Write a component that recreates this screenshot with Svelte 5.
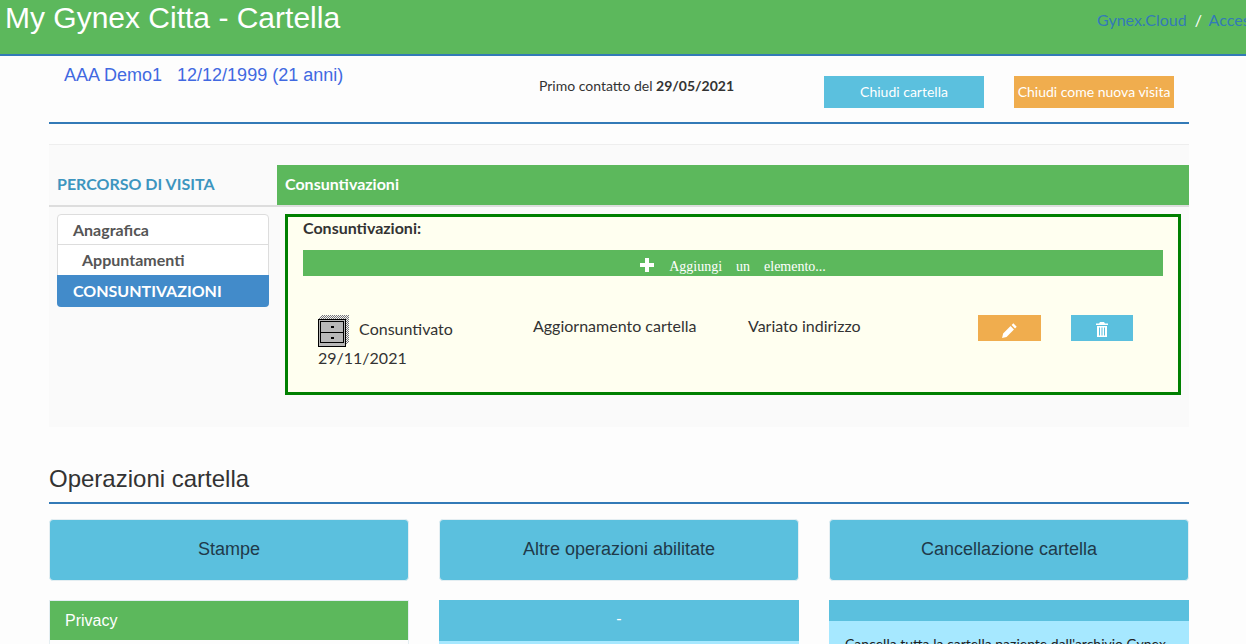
<script>
    const entries = [
        { stato: 'Consuntivato', data: '29/11/2021', tipo: 'Aggiornamento cartella', nota: 'Variato indirizzo' }
    ];
</script>

<div class="page">
    <header class="topbar">
        <h1>My Gynex Citta - Cartella</h1>
        <nav>
            <span class="link">Gynex.Cloud</span>
            <span class="sep">/</span>
            <span class="link">Accesso</span>
        </nav>
    </header>

    <div class="container">
        <section class="patient">
            <div class="who">AAA Demo1 <span>12/12/1999 (21 anni)</span></div>
            <div class="first">Primo contatto del <b>29/05/2021</b></div>
            <button class="btn info wide">Chiudi cartella</button>
            <button class="btn warn wide">Chiudi come nuova visita</button>
        </section>

        <hr />

        <section class="visit">
            <div class="tabs">
                <div class="tab-title">PERCORSO DI VISITA</div>
                <div class="tab-active">Consuntivazioni</div>
            </div>
            <div class="visit-body">
                <ul class="menu">
                    <li>Anagrafica</li>
                    <li class="sub">Appuntamenti</li>
                    <li class="active">CONSUNTIVAZIONI</li>
                </ul>
                <div class="box">
                    <div class="box-title">Consuntivazioni:</div>
                    <div class="add">
                        <svg width="14" height="14" viewBox="0 0 14 14"><path d="M5 0h4v5h5v4H9v5H5V9H0V5h5z" fill="#fff" /></svg>
                        <span>Aggiungi</span><span>un</span><span>elemento...</span>
                    </div>
                    {#each entries as e}
                        <div class="entry">
                            <div class="state">
                                <svg class="cabinet" width="32" height="32" viewBox="0 0 32 32">
                                    <defs>
                                        <pattern id="dither" width="2" height="2" patternUnits="userSpaceOnUse">
                                            <rect width="2" height="2" fill="#f4f4f4" />
                                            <rect width="1" height="1" fill="#777" />
                                            <rect x="1" y="1" width="1" height="1" fill="#777" />
                                        </pattern>
                                    </defs>
                                    <path d="M0 4L4 0H31V27L27 31H0z" fill="url(#dither)" />
                                    <rect x="0.500" y="4.500" width="27" height="27" fill="#b8b8b8" stroke="#000" />
                                    <rect x="2.500" y="6.500" width="23" height="11" fill="#b8b8b8" stroke="#000" />
                                    <rect x="2.500" y="17.500" width="23" height="10" fill="#b8b8b8" stroke="#000" />
                                    <rect x="13" y="11" width="3" height="2" fill="#000" />
                                    <rect x="13" y="22" width="3" height="2" fill="#000" />
                                </svg>
                                <span class="state-name">{e.stato}</span>
                                <div class="state-date">{e.data}</div>
                            </div>
                            <div class="tipo">{e.tipo}</div>
                            <div class="nota">{e.nota}</div>
                            <div class="actions">
                                <button class="btn warn icon edit" aria-label="Modifica">
                                    <svg width="17" height="17" viewBox="0 0 16 16"><path d="M11.6 1.200l3.200 3.200-1.600 1.600L10 2.800zM9 3.800L12.200 7l-7 7-4.200 1 1-4.200z" fill="#fff" /></svg>
                                </button>
                                <button class="btn info icon del" aria-label="Elimina">
                                    <svg width="14" height="15" viewBox="0 0 14 15"><path d="M5 0h4l1 1.500h3V3H1V1.500h3zM2 4h10v11H2zM4 5.500v8h1v-8zM6.500 5.500v8h1v-8zM9 5.500v8h1v-8z" fill="#fff" fill-rule="evenodd" /></svg>
                                </button>
                            </div>
                        </div>
                    {/each}
                </div>
            </div>
        </section>

        <h2>Operazioni cartella</h2>

        <div class="ops">
            <div class="op-head">Stampe</div>
            <div class="op-head">Altre operazioni abilitate</div>
            <div class="op-head">Cancellazione cartella</div>

            <div class="card bordered">
                <div class="card-head green">Privacy</div>
            </div>
            <div class="card">
                <div class="card-head blue">-</div>
                <div class="card-body"></div>
            </div>
            <div class="card">
                <div class="card-head blue thin"></div>
                <div class="card-body">Cancella tutta la cartella paziente dall'archivio Gynex</div>
            </div>
        </div>
    </div>
</div>

<style>
    :global(body) {
        background: #fdfdfd;
    }
    .page {
        height: 644px;
        overflow: hidden;
        font-family: 'Lato', sans-serif;
        font-size: 14px;
        color: #333;
    }
    .topbar {
        display: flex;
        justify-content: space-between;
        height: 54px;
        background-color: #5cb85c;
        border-bottom: 2px solid #337ab7;
        overflow: hidden;
    }
    .topbar h1 {
        margin: 3px 0 0 5px;
        font-family: 'Liberation Sans', Arial, sans-serif;
        font-size: 30px;
        line-height: 30px;
        font-weight: 400;
        color: #fff;
    }
    .topbar nav {
        width: 149px;
        flex: none;
        padding-top: 10px;
        font-size: 16px;
        line-height: 20px;
        white-space: nowrap;
        color: #fff;
    }
    .link {
        color: #337ab7;
    }
    .sep {
        margin: 0 3px 0 4px;
    }
    .container {
        width: 1140px;
        margin-left: 49px;
    }
    .patient {
        display: flex;
        align-items: flex-start;
        height: 66px;
        border-bottom: 2px solid #337ab7;
    }
    .who {
        flex: none;
        width: 460px;
        padding: 9px 0 0 15px;
        font-family: 'Liberation Sans', Arial, sans-serif;
        font-size: 18px;
        line-height: 20px;
        color: #4169e1;
    }
    .who span {
        margin-left: 10px;
    }
    .first {
        flex: none;
        width: 285px;
        padding: 21px 0 0 15px;
        line-height: 18px;
    }
    .btn {
        border: none;
        color: #fff;
        font-family: 'Lato', sans-serif;
        font-size: 14px;
        padding: 0;
    }
    .info {
        background-color: #5bc0de;
    }
    .warn {
        background-color: #f0ad4e;
    }
    .wide {
        flex: none;
        width: 160px;
        height: 32px;
        margin-top: 20px;
        margin-right: 30px;
        padding-bottom: 2px;
    }
    hr {
        height: 1px;
        margin: 20px 0;
        border: none;
        background: #eee;
    }
    .visit {
        height: 262px;
        background: #fafafa;
        margin-top: -20px;
        padding-top: 20px;
    }
    .tabs {
        display: flex;
        height: 40px;
        border-bottom: 2px solid #ddd;
    }
    .tab-title {
        width: 220px;
        padding: 11px 0 0 8px;
        font-size: 16px;
        line-height: 16px;
        font-weight: 700;
        color: #3d95bf;
    }
    .tab-active {
        flex: 1;
        padding: 11px 8px 0;
        font-size: 16px;
        line-height: 16px;
        font-weight: 700;
        color: #fff;
        background: #5cb85c;
    }
    .visit-body {
        display: flex;
        padding: 7px 8px 0;
        gap: 16px;
    }
    .menu {
        width: 212px;
        height: 93px;
        margin: 0;
        padding: 0;
        list-style: none;
        background: #fff;
        border: 1px solid #ddd;
        border-radius: 4px;
        box-sizing: border-box;
        font-size: 16px;
        font-weight: 700;
        color: #555;
    }
    .menu li {
        height: 30px;
        box-sizing: border-box;
        padding-left: 15px;
        line-height: 30px;
    }
    .menu li:first-child {
        border-bottom: 1px solid #ddd;
    }
    .menu .sub {
        padding-left: 24px;
    }
    .menu .active {
        margin: 0 -1px -1px;
        padding-left: 16px;
        height: 32px;
        line-height: 32px;
        background: #428bca;
        color: #fff;
        border-radius: 0 0 4px 4px;
    }
    .box {
        flex: 1;
        height: 181px;
        box-sizing: border-box;
        padding: 3px 15px 0;
        background: #fffff0;
        border: 3px solid #008000;
    }
    .box-title {
        font-size: 16px;
        font-weight: 700;
        line-height: 16px;
    }
    .add {
        display: flex;
        justify-content: center;
        align-items: center;
        gap: 14px;
        height: 26px;
        margin-top: 14px;
        background: #5cb85c;
        color: #fff;
        font-family: 'Liberation Serif', serif;
        font-size: 14px;
    }
    .add span {
        position: relative;
        top: 4px;
    }
    .add svg {
        margin-right: 1px;
        position: relative;
        top: 2px;
    }
    .entry {
        display: flex;
        align-items: flex-start;
        padding: 29px 0 0 15px;
        font-size: 16px;
        line-height: 22px;
    }
    .state {
        width: 215px;
        margin-top: 10px;
    }
    .cabinet {
        vertical-align: middle;
        margin-right: 5px;
    }
    .tipo {
        width: 215px;
        padding-top: 10px;
    }
    .nota {
        width: 230px;
        padding-top: 10px;
    }
    .actions {
        display: flex;
        gap: 30px;
        padding-top: 10px;
    }
    .icon {
        display: flex;
        align-items: center;
        justify-content: center;
        height: 26px;
    }
    .edit {
        width: 63px;
        padding-top: 4px;
    }
    .del {
        width: 62px;
        padding-top: 2px;
    }
    h2 {
        margin: 38px 0 0;
        height: 37px;
        font-family: 'Liberation Sans', Arial, sans-serif;
        font-size: 24px;
        line-height: 27px;
        font-weight: 400;
        color: #333;
        border-bottom: 2px solid #337ab7;
    }
    .ops {
        display: grid;
        grid-template-columns: repeat(3, 360px);
        column-gap: 30px;
        row-gap: 19px;
        margin-top: 15px;
    }
    .op-head {
        height: 62px;
        line-height: 58px;
        box-sizing: border-box;
        text-align: center;
        font-family: 'Liberation Sans', Arial, sans-serif;
        font-size: 18px;
        color: #1f3a4a;
        background: #5bc0de;
        border: 1px solid #e4eef2;
        border-radius: 4px;
    }
    .bordered {
        border: 1px solid #e4eef2;
    }
    .card-head {
        height: 41px;
        line-height: 38px;
        font-family: 'Liberation Sans', Arial, sans-serif;
        font-size: 16px;
        color: #fff;
    }
    .green {
        height: 39px;
        line-height: 40px;
        padding-left: 15px;
        background: #5cb85c;
    }
    .blue {
        background: #5bc0de;
        text-align: center;
    }
    .thin {
        height: 21px;
    }
    .card-body {
        min-height: 40px;
        padding: 14px 16px;
        background: #a6e8ff;
        font-size: 14px;
        color: #222;
    }
</style>
